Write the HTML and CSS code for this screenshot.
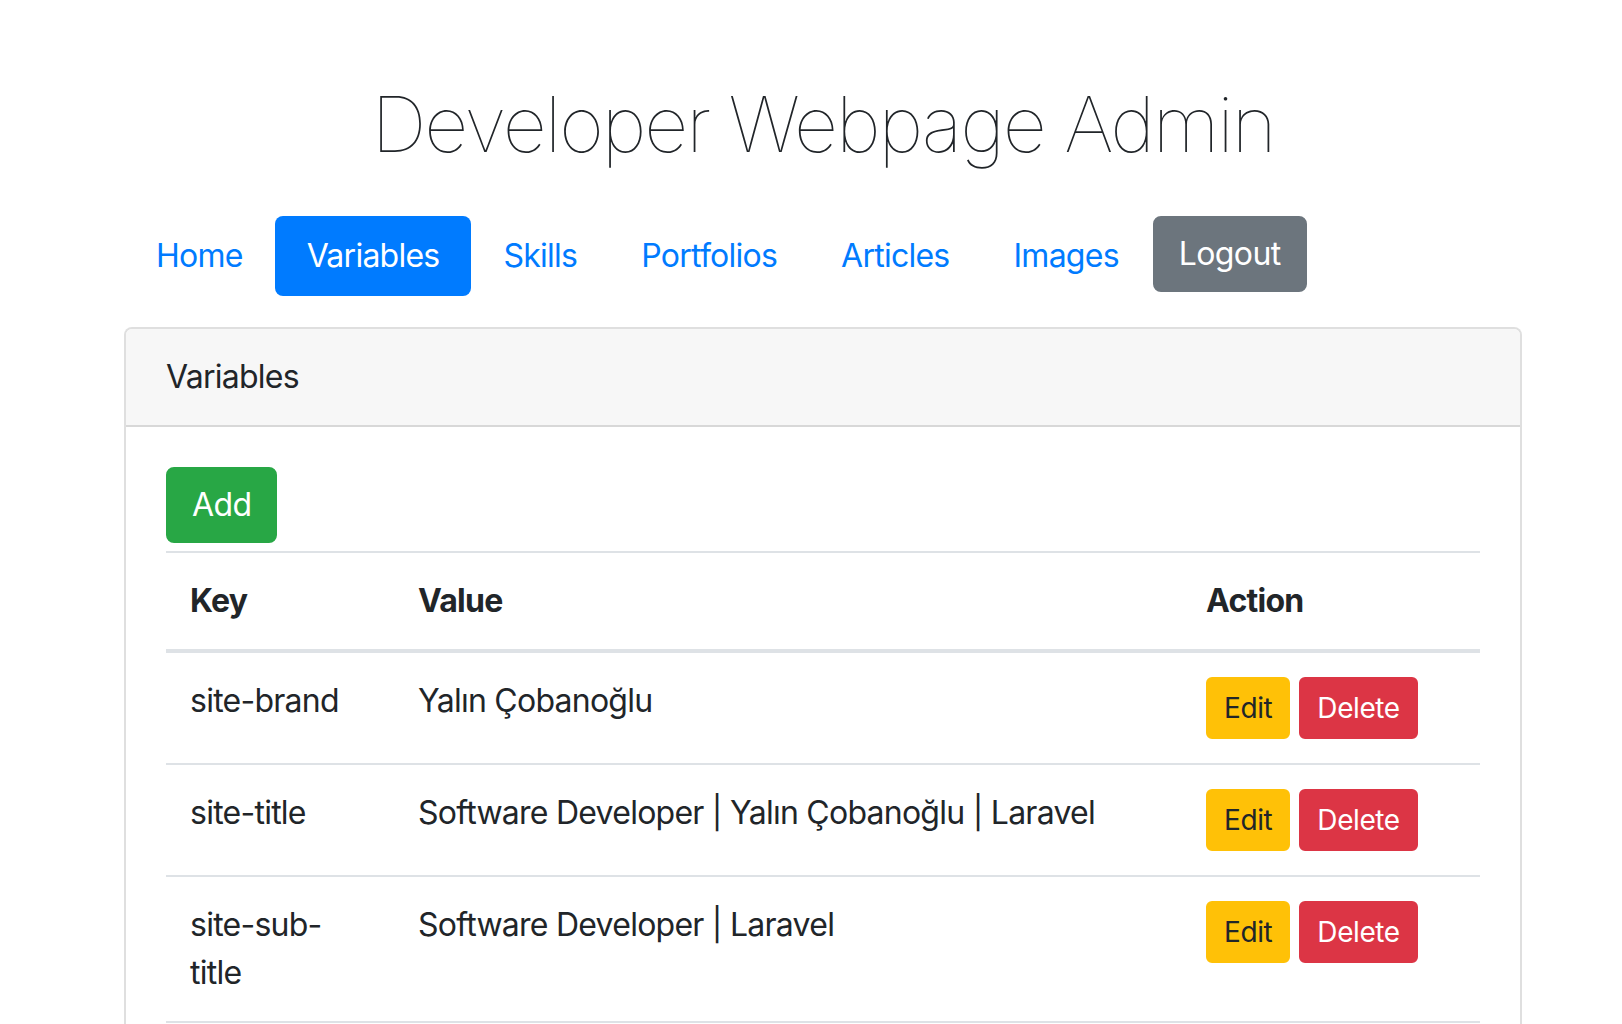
FILE: index.html
```html
<!DOCTYPE html>
<html lang="tr">
<head>
<meta charset="utf-8">
<title>Developer Webpage Admin</title>
<link rel="stylesheet" href="styles.css">
</head>
<body>
<div class="container">
  <h1 class="title">Developer Webpage Admin</h1>
  <ul class="nav">
    <li><a class="nav-link" href="#">Home</a></li>
    <li><a class="nav-link active" href="#">Variables</a></li>
    <li><a class="nav-link" href="#">Skills</a></li>
    <li><a class="nav-link" href="#">Portfolios</a></li>
    <li><a class="nav-link" href="#">Articles</a></li>
    <li><a class="nav-link" href="#">Images</a></li>
    <li><a class="btn btn-secondary" href="#">Logout</a></li>
  </ul>
  <div class="card">
    <div class="card-header">Variables</div>
    <div class="card-body">
      <div class="toolbar"><a class="btn btn-success" href="#">Add</a></div>
      <table class="table">
        <colgroup>
          <col class="col-key">
          <col class="col-value">
          <col class="col-action">
        </colgroup>
        <thead>
          <tr><th>Key</th><th>Value</th><th>Action</th></tr>
        </thead>
        <tbody>
          <tr>
            <td>site-brand</td>
            <td>Yalın Çobanoğlu</td>
            <td><div class="actions"><a class="btn-sm btn-warning" href="#">Edit</a><a class="btn-sm btn-danger" href="#">Delete</a></div></td>
          </tr>
          <tr>
            <td>site-title</td>
            <td>Software Developer | Yalın Çobanoğlu | Laravel</td>
            <td><div class="actions"><a class="btn-sm btn-warning" href="#">Edit</a><a class="btn-sm btn-danger" href="#">Delete</a></div></td>
          </tr>
          <tr>
            <td>site-sub-title</td>
            <td>Software Developer | Laravel</td>
            <td><div class="actions"><a class="btn-sm btn-warning" href="#">Edit</a><a class="btn-sm btn-danger" href="#">Delete</a></div></td>
          </tr>
        </tbody>
      </table>
    </div>
  </div>
</div>
</body>
</html>
```

FILE: styles.css
```css
* { box-sizing: border-box; }

html, body {
  margin: 0;
  padding: 0;
  background: #fff;
}

body {
  font-family: Inter, "Noto Sans", "Liberation Sans", sans-serif;
  font-size: 32px;
  line-height: 48px;
  color: #212529;
  overflow: hidden;
}

a { text-decoration: none; }

.container {
  width: 1398px;
  margin-left: 124px;
}

.title {
  margin: 76px 0 44px;
  font-size: 77px;
  line-height: 96px;
  font-weight: 100;
  letter-spacing: -2.15px;
  text-align: center;
  color: #212529;
}

.nav {
  display: flex;
  align-items: flex-start;
  list-style: none;
  margin: 0 0 31px;
  padding: 0;
}

.nav-link {
  display: block;
  padding: 16px 32px;
  color: #007bff;
  border-radius: 8px;
  letter-spacing: -0.75px;
}

.nav-link.active {
  background: #007bff;
  color: #fff;
}

.btn {
  display: inline-block;
  padding: 12px 24px;
  border: 2px solid transparent;
  border-radius: 8px;
  font-size: 32px;
  line-height: 48px;
  color: #fff;
  letter-spacing: -0.6px;
}

.btn-secondary {
  background: #6c757d;
  border-color: #6c757d;
  margin-left: 2px;
}

.btn-success {
  background: #28a745;
  border-color: #28a745;
}

.card {
  border: 2px solid rgba(0, 0, 0, 0.125);
  border-radius: 8px;
  background: #fff;
}

.card-header {
  padding: 24px 40px;
  background: #f7f7f7;
  border-bottom: 2px solid rgba(0, 0, 0, 0.125);
  border-radius: 6px 6px 0 0;
  letter-spacing: -0.75px;
}

.card-body {
  padding: 40px;
}

.toolbar {
  display: flex;
  margin-bottom: 8px;
}

.table {
  width: 100%;
  border-collapse: collapse;
  table-layout: fixed;
}

.col-key { width: 228px; }
.col-value { width: 788px; }
.col-action { width: auto; }

.table th,
.table td {
  padding: 24px;
  text-align: left;
  vertical-align: top;
  border-top: 2px solid #dee2e6;
  letter-spacing: -0.75px;
}

.table th {
  font-weight: 700;
  vertical-align: bottom;
  border-bottom: 4px solid #dee2e6;
}

.table tbody tr:last-child td {
  border-bottom: 2px solid #dee2e6;
}

.actions {
  display: flex;
  gap: 9px;
}

.btn-sm {
  display: inline-block;
  padding: 8px 16px;
  border: 2px solid transparent;
  border-radius: 6px;
  font-size: 28px;
  line-height: 42px;
  letter-spacing: -0.4px;
}

.btn-warning {
  background: #ffc107;
  border-color: #ffc107;
  color: #212529;
}

.btn-danger {
  background: #dc3545;
  border-color: #dc3545;
  color: #fff;
}
```
